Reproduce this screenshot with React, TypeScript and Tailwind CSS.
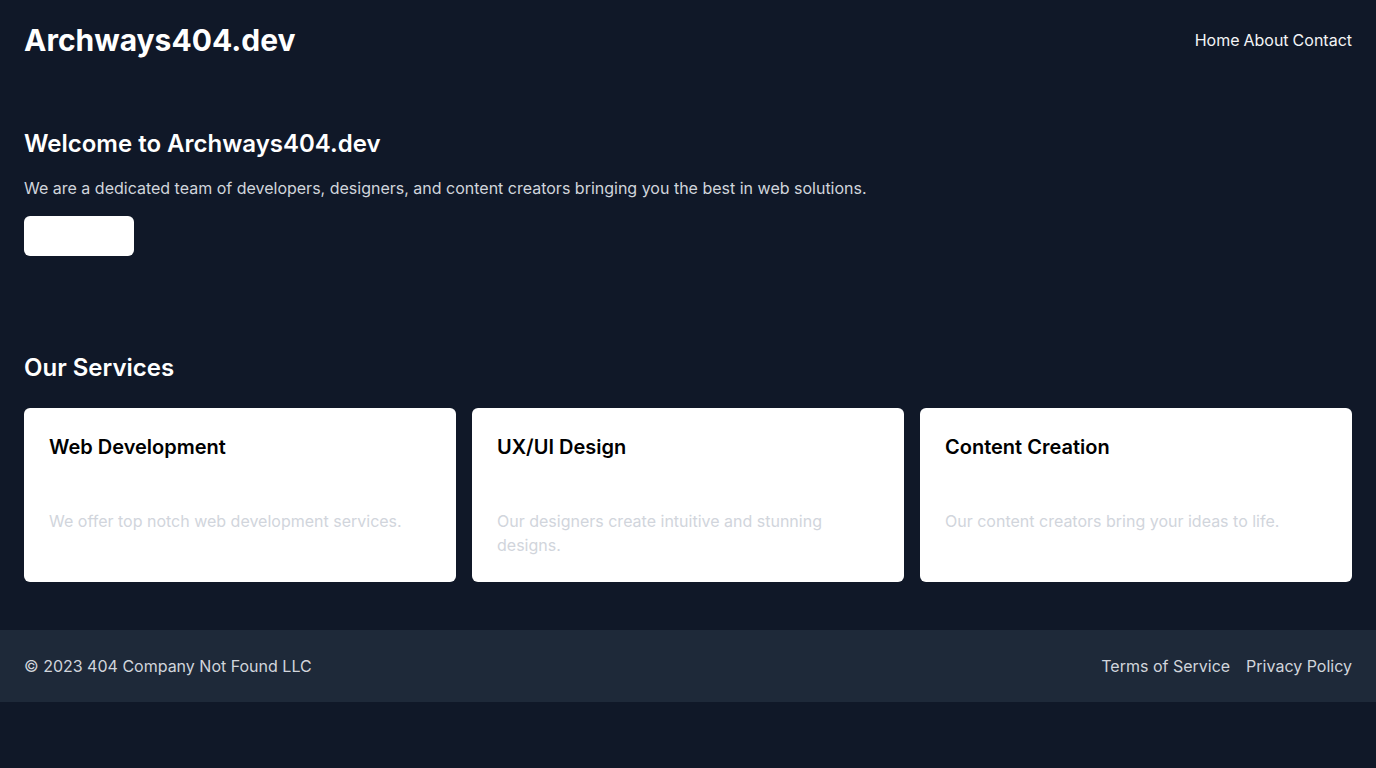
export default function App() {
  const services = [
    { title: "Web Development", text: "We offer top notch web development services." },
    { title: "UX/UI Design", text: "Our designers create intuitive and stunning designs." },
    { title: "Content Creation", text: "Our content creators bring your ideas to life." },
  ];

  return (
    <div className="min-h-screen bg-gray-900 font-['Inter',sans-serif] text-white">
      {/* Header */}
      <header className="flex items-center justify-between px-6 py-[22px]">
        <h1 className="text-3xl font-bold">Archways404.dev</h1>
        <nav className="flex gap-1 text-base text-gray-100">
          <a href="#">Home</a>
          <a href="#">About</a>
          <a href="#">Contact</a>
        </nav>
      </header>

      {/* Hero */}
      <section className="px-6 py-12">
        <h2 className="mb-4 text-2xl font-semibold">Welcome to Archways404.dev</h2>
        <p className="text-base text-gray-300">
          We are a dedicated team of developers, designers, and content creators bringing you the best in web solutions.
        </p>
        <button className="mt-4 h-10 w-[110px] rounded-md bg-white text-white">Learn More</button>
      </section>

      {/* Services */}
      <section className="px-6 py-12">
        <h2 className="mb-6 text-2xl font-semibold">Our Services</h2>
        <div className="grid grid-cols-3 gap-4">
          {services.map((s) => (
            <div key={s.title} className="rounded-md bg-white px-[25px] py-[25px]">
              <h3 className="mb-12 text-xl font-semibold text-black">{s.title}</h3>
              <p className="text-base text-gray-300">{s.text}</p>
            </div>
          ))}
        </div>
      </section>

      {/* Footer */}
      <footer className="flex items-center justify-between bg-gray-800 px-6 py-6 text-gray-300">
        <p>© 2023 404 Company Not Found LLC</p>
        <div className="flex gap-4">
          <a href="#">Terms of Service</a>
          <a href="#">Privacy Policy</a>
        </div>
      </footer>
    </div>
  );
}
